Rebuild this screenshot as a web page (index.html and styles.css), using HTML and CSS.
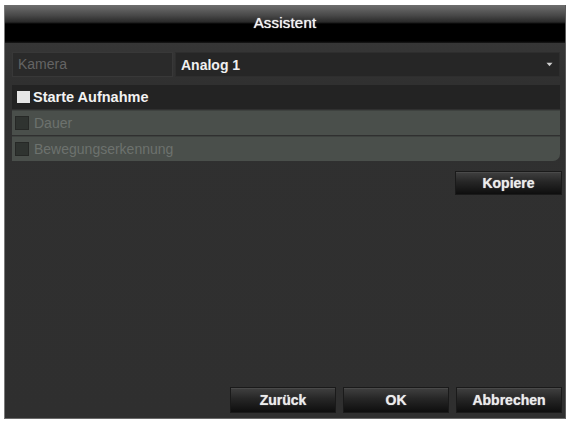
FILE: index.html
```html
<!DOCTYPE html>
<html lang="de">
<head>
<meta charset="utf-8">
<title>Assistent</title>
<link rel="stylesheet" href="styles.css">
</head>
<body>
<div class="window">
  <div class="titlebar"><span class="title">Assistent</span></div>
  <div class="content">
    <div class="row-camera">
      <div class="cam-label">Kamera</div>
      <div class="cam-value">
        <span>Analog 1</span>
        <svg class="arrow" width="7" height="5" viewBox="0 0 7 5"><path d="M0.5 0.8 L6.5 0.8 L3.5 4.2 Z" fill="#cfcfcf"/></svg>
      </div>
    </div>
    <div class="row-record">
      <span class="check check-on"></span>
      <span class="record-text">Starte Aufnahme</span>
    </div>
    <div class="row-opt">
      <span class="check check-off"></span>
      <span class="opt-text">Dauer</span>
    </div>
    <div class="row-opt row-last">
      <span class="check check-off"></span>
      <span class="opt-text">Bewegungserkennung</span>
    </div>
    <div class="copy-line">
      <button class="btn btn-copy">Kopiere</button>
    </div>
    <div class="spacer"></div>
    <div class="footer">
      <button class="btn btn-foot">Zurück</button>
      <button class="btn btn-foot">OK</button>
      <button class="btn btn-foot">Abbrechen</button>
    </div>
  </div>
</div>
</body>
</html>
```
FILE: styles.css
```css
html, body {
  margin: 0;
  padding: 0;
  background: #ffffff;
}
body {
  padding: 5px 0 0 4px;
  font-family: "Liberation Sans", Arial, sans-serif;
}
.window {
  width: 562px;
  height: 414px;
  box-sizing: border-box;
  background: #303030;
  border-left: 1px solid #7a7a7a;
  border-right: 1px solid #5a5a5a;
  border-bottom: 1px solid #6a6a6a;
  display: flex;
  flex-direction: column;
}
.titlebar {
  height: 38px;
  flex: none;
  background: linear-gradient(to bottom, #6e6e6e 0px, #4a4a4a 10px, #2a2a2a 17px, #000 19px, #000 36px, #1a1a1a 38px);
  display: flex;
  justify-content: center;
  padding-top: 10px;
  box-sizing: border-box;
}
.title {
  color: #f2f2f2;
  font-size: 15px;
  letter-spacing: 0.2px;
  line-height: 16px;
  text-shadow: 0 0 1px #fff;
}
.content {
  flex: 1;
  display: flex;
  flex-direction: column;
  padding: 9px 5px 5px 7px;
  background: linear-gradient(to bottom, #363636 0px, #303030 40px, #2f2f2f 100%);
}
.row-camera {
  height: 25px;
  display: flex;
  gap: 2px;
}
.cam-label {
  width: 161px;
  box-sizing: border-box;
  background: #2a2a2a;
  border: 1px solid #383838;
  color: #646464;
  font-size: 14px;
  line-height: 23px;
  padding-left: 5px;
}
.cam-value {
  flex: 1;
  background: #262626;
  border: 1px solid #2e2e2e;
  display: flex;
  align-items: center;
  justify-content: space-between;
  padding: 0 6px 0 5px;
  color: #f0f0f0;
  font-weight: bold;
  font-size: 14px;
}
.arrow {
  display: block;
}
.row-record {
  margin-top: 8px;
  height: 24px;
  background: #232323;
  display: flex;
  align-items: center;
  padding-left: 5px;
  gap: 3px;
}
.check {
  display: block;
  flex: none;
}
.check-on {
  width: 13px;
  height: 12px;
  background: #e6e6e6;
}
.record-text {
  color: #f2f2f2;
  font-weight: bold;
  font-size: 14.5px;
}
.row-opt {
  height: 25px;
  margin-top: 1px;
  background: #4a4f4b;
  border-top: 1px solid #3e423f;
  box-sizing: border-box;
  display: flex;
  align-items: center;
  padding-left: 3px;
  gap: 5px;
}
.row-last {
  border-bottom-right-radius: 7px;
}
.check-off {
  width: 14px;
  height: 14px;
  box-sizing: border-box;
  background: #2f3330;
  border: 1px solid #262826;
}
.opt-text {
  color: #6d726e;
  font-size: 14px;
}
.copy-line {
  display: flex;
  justify-content: flex-end;
  margin-top: 10px;
  margin-right: -2px;
}
.btn {
  font-family: "Liberation Sans", Arial, sans-serif;
  font-weight: bold;
  font-size: 14px;
  color: #ececec;
  text-shadow: 0 0 1px #bbb;
  background: linear-gradient(to bottom, #404040 0%, #262626 45%, #0e0e0e 100%);
  border: 1px solid #1a1a1a;
  box-shadow: inset 0 1px 0 #4a4a4a;
  padding: 0;
  cursor: default;
}
.btn-copy {
  width: 107px;
  height: 24px;
}
.spacer {
  flex: 1;
}
.footer {
  display: flex;
  justify-content: flex-end;
  gap: 7px;
  margin-right: -2px;
}
.btn-foot {
  width: 106px;
  height: 26px;
}
```
